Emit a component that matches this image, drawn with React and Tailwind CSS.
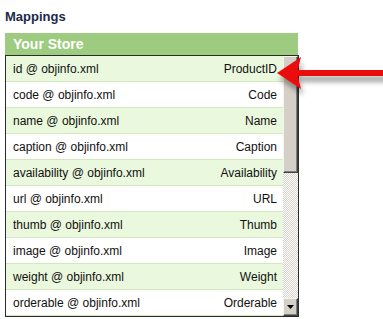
import React from 'react'

const rows = [
  { field: 'id', value: 'ProductID' },
  { field: 'code', value: 'Code' },
  { field: 'name', value: 'Name' },
  { field: 'caption', value: 'Caption' },
  { field: 'availability', value: 'Availability' },
  { field: 'url', value: 'URL' },
  { field: 'thumb', value: 'Thumb' },
  { field: 'image', value: 'Image' },
  { field: 'weight', value: 'Weight' },
  { field: 'orderable', value: 'Orderable' },
]

const Scrollbar = () => (
  <div className="w-[15px] flex flex-col bg-[repeating-conic-gradient(#ffffff_0_25%,#d6d3cc_0_50%)] bg-[length:2px_2px]">
    {/* thumb */}
    <div className="h-[117px] bg-[#d4d0c8] border-t border-l border-t-[#f4f3ef] border-l-[#f4f3ef] border-r border-b border-r-[#404040] border-b-[#404040] shadow-[inset_-1px_-1px_0_#808080]" />
    <div className="flex-1" />
    {/* down button */}
    <div className="h-[18px] bg-[#d4d0c8] border-t border-l border-t-[#f4f3ef] border-l-[#f4f3ef] border-r border-b border-r-[#404040] border-b-[#404040] shadow-[inset_-1px_-1px_0_#808080] flex items-center justify-center">
      <svg width="7" height="4" viewBox="0 0 7 4">
        <polygon points="0,0 7,0 3.5,4" fill="#000" />
      </svg>
    </div>
  </div>
)

const Arrow = () => (
  <svg className="absolute left-[270px] top-[50px]" width="113" height="50" viewBox="0 0 113 50">
    <defs>
      <filter id="arrowShadow" x="-20%" y="-50%" width="140%" height="200%">
        <feDropShadow dx="2" dy="6" stdDeviation="2.5" floodColor="#000" floodOpacity="0.35" />
      </filter>
    </defs>
    <g filter="url(#arrowShadow)">
      <rect x="26" y="20" width="90" height="6" fill="#ea1111" />
      <polygon points="7,23 31,7 27,23 31,39" fill="#ea1111" />
    </g>
  </svg>
)

export default function App() {
  return (
    <div className="relative w-[383px] h-[319px] bg-white overflow-hidden font-['Liberation_Sans',Arial,sans-serif]">
      <div className="pl-[5px] pt-[8px]">
        <div className="text-[13px] font-bold text-[#1b2a4a] leading-[17px]">Mappings</div>

        {/* header */}
        <div className="mt-[8px] w-[293px] h-[22px] bg-[#9dcb7f] text-white font-bold text-[14px] leading-[22px] pl-[8px]">
          Your Store
        </div>

        {/* table */}
        <div className="w-[294px] h-[262px] border border-[#2a2a2a] flex">
          <div className="flex-1 flex flex-col">
            {rows.map((r, i) => (
              <div
                key={r.field}
                className={`h-[26px] flex items-center justify-between pl-[7px] pr-[6px] border-b border-[#d2e8bf] text-[12px] text-[#111] ${i % 2 === 0 ? 'bg-[#eaf8dd]' : 'bg-white'}`}
              >
                <span>{r.field} @ objinfo.xml</span>
                <span>{r.value}</span>
              </div>
            ))}
          </div>
          <Scrollbar />
        </div>
      </div>
      <Arrow />
    </div>
  )
}
